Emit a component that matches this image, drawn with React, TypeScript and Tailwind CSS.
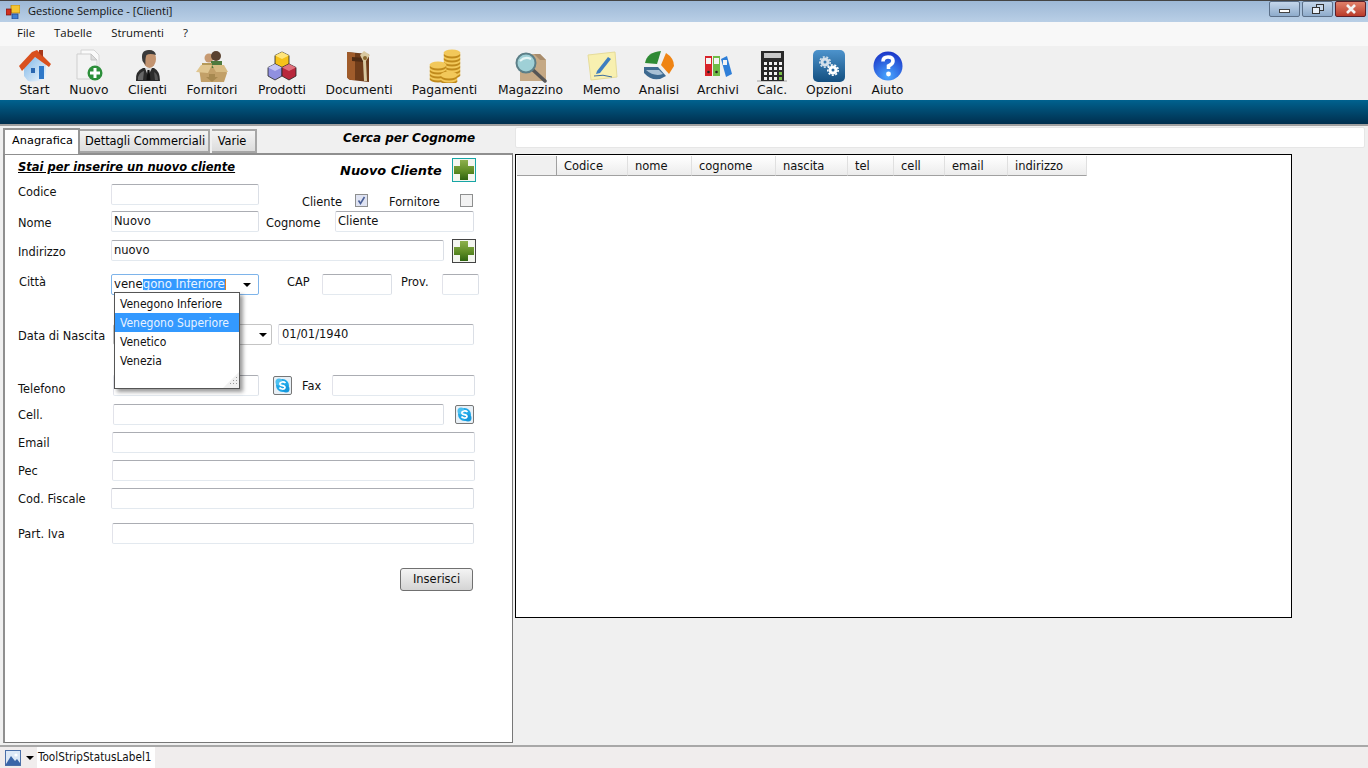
import type { ReactNode } from "react";

const DV = "font-['DejaVu_Sans',sans-serif]";
const COND = "font-['DejaVu_Sans_Condensed','DejaVu_Sans',sans-serif]";

function HouseIcon() {
  return (
    <svg width="34" height="34" viewBox="0 0 34 34">
      <defs>
        <linearGradient id="wall" x1="0" y1="0" x2="1" y2="1">
          <stop offset="0" stopColor="#7db6e8" />
          <stop offset="1" stopColor="#f4f8fc" />
        </linearGradient>
      </defs>
      <path d="M6 16 L17 8 L28 15 L28 29 Q18 34 10 32 L6 27 Z" fill="url(#wall)" />
      <path d="M1 17 L14 3 L19 1 L33 15 L31 18 L17 8 L4 22 Z" fill="#d9501e" />
      <path d="M21 1 h4 v7 l-4 -4 Z" fill="#a8381a" />
      <rect x="13" y="19" width="4" height="5" fill="#2a66b0" />
      <rect x="21" y="17" width="5" height="13" fill="#2f78c8" />
    </svg>
  );
}

function NewDocIcon() {
  return (
    <svg width="34" height="34" viewBox="0 0 34 34">
      <path d="M9 1 H22 L27 6 V26 H9 Z" fill="#fafafa" stroke="#d4d4d4" />
      <path d="M5 5 H19 L25 11 V30 H5 Z" fill="#f3f3f3" stroke="#cfcfcf" />
      <path d="M19 5 V11 H25 Z" fill="#dcdcdc" stroke="#c4c4c4" />
      <circle cx="23" cy="24" r="7.5" fill="#2c8f3a" />
      <path d="M23 19 v10 M18 24 h10" stroke="#fff" strokeWidth="3" />
    </svg>
  );
}

function PersonIcon() {
  return (
    <svg width="34" height="34" viewBox="0 0 34 34">
      <path d="M5 32 Q4 22 12 19 L23 19 Q29 22 29 32 Z" fill="#2b2b2b" />
      <path d="M14 19 L17 27 L21 19 Z" fill="#dcdcdc" />
      <path d="M16.5 21 h2 l1 10 h-4 Z" fill="#111" />
      <path d="M7 28 Q9 23 13 22 L12 31 H7 Z" fill="#666" />
      <path d="M23 23 Q27 25 27 31 H24 Z" fill="#555" />
      <ellipse cx="18.5" cy="10" rx="6.5" ry="9" fill="#c39470" />
      <path d="M11.5 12 Q9 1 18 1 Q24 1 25 6 Q19 4 15.5 6 Q14 9 14.5 16 Z" fill="#3a3a3a" />
    </svg>
  );
}

function BoxIcon() {
  return (
    <svg width="34" height="34" viewBox="0 0 34 34">
      <circle cx="14" cy="9" r="4.5" fill="#c79a72" />
      <circle cx="21" cy="7" r="5" fill="#5a4230" />
      <path d="M16 12 h11 v8 h-11 Z" fill="#4e7a3e" />
      <path d="M7 14 h10 v6 h-10 Z" fill="#b59a5a" />
      <path d="M4 19 H30 L32 24 L29 33 H6 Z" fill="#c2a068" />
      <path d="M1 23 L6 16 H17 L13 24 Z" fill="#e0c690" />
      <path d="M17 16 H29 L33 23 H21 Z" fill="#d8bc84" />
      <path d="M14 25 h6 v3 h3 l-6 5 l-6 -5 h3 Z" fill="#a78950" />
    </svg>
  );
}

function CubesIcon() {
  return (
    <svg width="34" height="34" viewBox="0 0 34 34">
      <path d="M17 3 L24 6.5 V15 L17 18.5 L10 15 V6.5 Z" fill="#f6c21a" stroke="#222" strokeWidth="0.8" />
      <path d="M10 6.5 L17 10 L24 6.5 L17 3 Z" fill="#ffe57a" />
      <path d="M10 15 L17 18.5 V27 L10 31 L3 27 V18.5 Z" fill="#9090e0" stroke="#222" strokeWidth="0.8" />
      <path d="M3 18.5 L10 22 L17 18.5 L10 15 Z" fill="#c5c5f5" />
      <path d="M24 15 L31 18.5 V27 L24 31 L17 27 V18.5 Z" fill="#b8283c" stroke="#222" strokeWidth="0.8" />
      <path d="M17 18.5 L24 22 L31 18.5 L24 15 Z" fill="#e0707c" />
    </svg>
  );
}

function BookIcon() {
  return (
    <svg width="34" height="34" viewBox="0 0 34 34">
      <path d="M5 3 L27 5 V33 L9 31 Q5 30 5 27 Z" fill="#6e3c1a" />
      <path d="M5 3 L13 4 V31 L9 31 Q5 30 5 27 Z" fill="#a05c2b" />
      <path d="M10 8 L22 9 V13 L10 12 Z" fill="#4f2c14" />
      <path d="M22 2 L28 6 L24 12 L25 32 L22 32 L21 12 L18 6 Z" fill="#d9c9a0" />
      <circle cx="23" cy="9" r="2" fill="#8a6a30" />
    </svg>
  );
}

function CoinStack({ x, top, n }: { x: number; top: number; n: number }) {
  const coins = Array.from({ length: n }, (_, i) => top + i * 4);
  return (
    <g>
      {coins.reverse().map((y) => (
        <g key={y}>
          <ellipse cx={x} cy={y + 2} rx="8.5" ry="3.5" fill="#c08a1c" />
          <ellipse cx={x} cy={y} rx="8.5" ry="3.5" fill="#f2c85a" />
        </g>
      ))}
    </g>
  );
}

function CoinsIcon() {
  return (
    <svg width="34" height="34" viewBox="0 0 34 34">
      <CoinStack x={24} top={4} n={6} />
      <CoinStack x={10} top={16} n={4} />
      <CoinStack x={21} top={26} n={2} />
    </svg>
  );
}

function MagnifierIcon() {
  return (
    <svg width="34" height="34" viewBox="0 0 34 34">
      <path d="M6 5 H26 L32 11 V32 H6 Z" fill="#c5a985" />
      <path d="M20 5 H26 L32 11 H26 Z" fill="#a88c6c" />
      <path d="M19 21 L31 32" stroke="#555" strokeWidth="3.5" strokeLinecap="round" />
      <circle cx="12" cy="14" r="9.5" fill="#9fd0d6" stroke="#5c7f88" strokeWidth="2" />
      <path d="M6 12 Q11 7 17 10" stroke="#e4f5f5" strokeWidth="2" fill="none" />
    </svg>
  );
}

function NoteIcon() {
  return (
    <svg width="34" height="34" viewBox="0 0 34 34">
      <path d="M3 6 L30 3 L32 28 L6 31 Z" fill="#f8f0b0" stroke="#e6dc9a" />
      <path d="M12 22 L23 8 L26 10 L15 24 L11 25 Z" fill="#3f7fc0" />
      <path d="M9 27 Q18 25 27 28" stroke="#3f6fa0" strokeWidth="1" fill="none" />
    </svg>
  );
}

function PieIcon() {
  return (
    <svg width="34" height="34" viewBox="0 0 34 34">
      <path d="M15 15 L3 14 Q5 3 19 2 Z" fill="#2f8a34" />
      <path d="M19 16 L24 4 Q32 9 32 17 L27 25 Z" fill="#ef8414" />
      <path d="M2 18 L16 18 L24 27 Q12 35 2 24 Z" fill="#3e6a90" />
      <path d="M4 21 H17 L21 25 Q12 28 4 21 Z" fill="#a8c0d4" />
    </svg>
  );
}

function BindersIcon() {
  return (
    <svg width="34" height="34" viewBox="0 0 34 34">
      <rect x="4" y="7" width="7" height="20" fill="#d8232a" />
      <rect x="12" y="7" width="7" height="20" fill="#6fbb47" />
      <path d="M20 10 L26 7 L31 25 L25 28 Z" fill="#2f7fd8" />
      <rect x="5" y="9" width="5" height="6" fill="#f4f4f4" />
      <rect x="13" y="9" width="5" height="6" fill="#f4f4f4" />
      <rect x="22" y="11" width="4" height="5" fill="#f4f4f4" />
      <circle cx="7.5" cy="23" r="1.3" fill="#222" />
      <circle cx="15.5" cy="23" r="1.3" fill="#222" />
    </svg>
  );
}

function CalcIcon() {
  const keys = [13, 18, 23, 28].flatMap((y) =>
    [9, 14, 19, 24].map((x) => (
      <rect key={`${x}-${y}`} x={x} y={y} width="3" height="3" fill={x === 24 && y > 20 ? "#7cc04a" : "#f2f2f2"} />
    )),
  );
  return (
    <svg width="34" height="34" viewBox="0 0 34 34">
      <rect x="2" y="31" width="30" height="2" fill="#c8c8c8" />
      <rect x="6" y="2" width="23" height="30" fill="#2a2a2a" />
      <rect x="9" y="4" width="17" height="5" fill="#c8c8c8" />
      {keys}
    </svg>
  );
}

function GearsIcon() {
  return (
    <svg width="34" height="34" viewBox="0 0 34 34">
      <defs>
        <linearGradient id="tile" x1="0" y1="0" x2="0" y2="1">
          <stop offset="0" stopColor="#4d93cc" />
          <stop offset="1" stopColor="#134f80" />
        </linearGradient>
      </defs>
      <rect x="1" y="1" width="32" height="32" rx="5" fill="url(#tile)" />
      <circle cx="13" cy="13" r="3" fill="none" stroke="#d4e0ea" strokeWidth="3" />
      <circle cx="13" cy="13" r="5.2" fill="none" stroke="#d4e0ea" strokeWidth="1.6" strokeDasharray="2 1.6" />
      <circle cx="21" cy="21" r="3" fill="none" stroke="#fff" strokeWidth="3" />
      <circle cx="21" cy="21" r="5.2" fill="none" stroke="#fff" strokeWidth="1.6" strokeDasharray="2 1.6" />
    </svg>
  );
}

function HelpIcon() {
  return (
    <svg width="34" height="34" viewBox="0 0 34 34">
      <defs>
        <radialGradient id="help" cx="0.5" cy="0.85" r="0.85">
          <stop offset="0" stopColor="#4aa8ff" />
          <stop offset="1" stopColor="#1a34c8" />
        </radialGradient>
      </defs>
      <circle cx="17" cy="17" r="14.5" fill="url(#help)" />
      <path d="M12 12.5 Q12 8 17 8 Q22 8 22 12 Q22 15 17.5 17 V20" fill="none" stroke="#fff" strokeWidth="3.6" />
      <circle cx="17.5" cy="25" r="2.4" fill="#fff" />
    </svg>
  );
}

const tools: { label: string; w: string; icon: ReactNode }[] = [
  { label: "Start", w: "w-[31px]", icon: <HouseIcon /> },
  { label: "Nuovo", w: "w-[40px]", icon: <NewDocIcon /> },
  { label: "Clienti", w: "w-[39px]", icon: <PersonIcon /> },
  { label: "Fornitori", w: "w-[52px]", icon: <BoxIcon /> },
  { label: "Prodotti", w: "w-[50px]", icon: <CubesIcon /> },
  { label: "Documenti", w: "w-[66px]", icon: <BookIcon /> },
  { label: "Pagamenti", w: "w-[67px]", icon: <CoinsIcon /> },
  { label: "Magazzino", w: "w-[67px]", icon: <MagnifierIcon /> },
  { label: "Memo", w: "w-[37px]", icon: <NoteIcon /> },
  { label: "Analisi", w: "w-[40px]", icon: <PieIcon /> },
  { label: "Archivi", w: "w-[40px]", icon: <BindersIcon /> },
  { label: "Calc.", w: "w-[30px]", icon: <CalcIcon /> },
  { label: "Opzioni", w: "w-[46px]", icon: <GearsIcon /> },
  { label: "Aiuto", w: "w-[33px]", icon: <HelpIcon /> },
];

const columns = [
  { name: "Codice", w: "w-[71px]" },
  { name: "nome", w: "w-[64px]" },
  { name: "cognome", w: "w-[84px]" },
  { name: "nascita", w: "w-[72px]" },
  { name: "tel", w: "w-[46px]" },
  { name: "cell", w: "w-[51px]" },
  { name: "email", w: "w-[63px]" },
  { name: "indirizzo", w: "w-[79px]" },
];

function Field({ className, value }: { className: string; value?: string }) {
  return (
    <div
      className={`flex h-[21px] shrink-0 items-center rounded-[2px] border border-[#abadb3] border-r-[#dbdfe6] border-b-[#e3e9ef] border-l-[#e2e3ea] bg-white pl-[2px] text-[11.5px] leading-none text-[#111] ${className}`}
    >
      {value}
    </div>
  );
}

function PlusButton({ teal }: { teal?: boolean }) {
  return (
    <div
      className={`flex h-[24px] w-[24px] shrink-0 items-center justify-center border ${teal ? "border-[#17a5a5]" : "border-[#444]"} bg-[#f4f6f0]`}
    >
      <svg width="20" height="20" viewBox="0 0 20 20">
        <defs>
          <linearGradient id="plus" x1="0" y1="0" x2="0" y2="1">
            <stop offset="0" stopColor="#8db04c" />
            <stop offset="0.55" stopColor="#5f8d25" />
            <stop offset="1" stopColor="#2f6410" />
          </linearGradient>
        </defs>
        <path d="M6 0 h8 v6 h6 v8 h-6 v6 h-8 v-6 h-6 v-8 h6 Z" fill="url(#plus)" />
      </svg>
    </div>
  );
}

function SkypeButton() {
  return (
    <div className="flex h-[19px] w-[19px] shrink-0 items-center justify-center rounded-[2px] border border-[#777] bg-[#e8f0f6]">
      <svg width="15" height="15" viewBox="0 0 15 15">
        <circle cx="7.5" cy="7.5" r="6.5" fill="#1fa8e8" />
        <circle cx="4" cy="4" r="3.5" fill="#4cc0f0" />
        <circle cx="11" cy="11" r="3.5" fill="#1598dc" />
        <path d="M10.5 5 Q9 3.5 7 4 Q4.5 4.5 5 6.3 Q5.5 7.5 7.5 7.7 Q10 8 10 9.7 Q9.5 11.3 7.2 11 Q5.2 10.8 4.5 9.5" fill="none" stroke="#fff" strokeWidth="1.7" />
      </svg>
    </div>
  );
}

function Checkbox({ checked }: { checked?: boolean }) {
  return (
    <div className={`flex h-[13px] w-[13px] shrink-0 items-center justify-center border border-[#8e8f8f] ${checked ? "bg-[#dfe3f2]" : "bg-[#f2f2f2]"}`}>
      {checked && (
        <svg width="9" height="9" viewBox="0 0 9 9">
          <path d="M1.5 4.5 L3.5 7.5 L7.5 1" fill="none" stroke="#4a5f97" strokeWidth="1.6" />
        </svg>
      )}
    </div>
  );
}

function ComboArrow() {
  return <div className="h-0 w-0 border-x-[4px] border-t-[4px] border-x-transparent border-t-black" />;
}

export default function App() {
  return (
    <div className={`flex h-[768px] w-[1368px] flex-col overflow-hidden bg-[#f0f0f0] ${DV} text-black`}>
      {/* title bar */}
      <div className="flex h-[22px] shrink-0 items-center border-t border-[#444] bg-gradient-to-b from-[#9db8d6] to-[#b9cfe6] pl-[6px]">
        <svg width="14" height="14" viewBox="0 0 14 14">
          <rect x="5" y="0" width="9" height="8" fill="#f4c430" stroke="#a87a10" strokeWidth="0.7" />
          <rect x="0" y="4" width="5" height="6" fill="#d03020" stroke="#701010" strokeWidth="0.7" />
          <rect x="6" y="9" width="6" height="5" fill="#3f7fd0" stroke="#204080" strokeWidth="0.7" />
        </svg>
        <span className="ml-[8px] font-['Open_Sans',sans-serif] text-[11.1px] text-[#111]">Gestione Semplice - [Clienti]</span>
        <div className="ml-auto flex items-start self-start pr-[2px]">
          <div className="flex h-[16px] w-[31px] items-center justify-center rounded-[2px] border border-[#5b6f88] bg-gradient-to-b from-[#c4d6ea] to-[#8eabcb]">
            <div className="mt-[3px] h-[4px] w-[11px] border border-[#444] bg-white" />
          </div>
          <div className="ml-[2px] flex h-[16px] w-[31px] items-center justify-center rounded-[2px] border border-[#5b6f88] bg-gradient-to-b from-[#c4d6ea] to-[#8eabcb]">
            <svg width="12" height="10" viewBox="0 0 12 10">
              <rect x="4.5" y="0.5" width="7" height="6" fill="#c8d8ea" stroke="#333" />
              <rect x="0.5" y="3.5" width="7" height="6" fill="#e8eff7" stroke="#333" />
            </svg>
          </div>
          <div className="ml-[2px] flex h-[16px] w-[31px] items-center justify-center rounded-[2px] border border-[#5a1f2a] bg-gradient-to-b from-[#e0806a] to-[#b93a2a]">
            <svg width="12" height="10" viewBox="0 0 12 10">
              <path d="M2 1 L10 9 M10 1 L2 9" stroke="#f4f4f4" strokeWidth="2.6" />
            </svg>
          </div>
        </div>
      </div>

      {/* menu */}
      <div className="flex h-[24px] shrink-0 items-center gap-[19px] bg-[#f8f8f8] pb-[2px] pl-[17px] font-['Open_Sans',sans-serif] text-[11.4px] text-[#111]">
        <span>File</span>
        <span>Tabelle</span>
        <span>Strumenti</span>
        <span>?</span>
      </div>

      {/* toolbar */}
      <div className="flex h-[54px] shrink-0 items-start gap-[19px] bg-[#f0f0f0] pl-[19px]">
        {tools.map((t) => (
          <div key={t.label} className={`flex ${t.w} shrink-0 flex-col items-center pt-[3px]`}>
            <div className="flex h-[34px] w-0 items-center justify-center">
              <div className="shrink-0">{t.icon}</div>
            </div>
            <span className="mt-[-1px] text-[12.3px] leading-[17px] whitespace-nowrap text-[#111]">{t.label}</span>
          </div>
        ))}
      </div>

      {/* blue band */}
      <div className="h-[24px] shrink-0 bg-gradient-to-b from-[#00628f] to-[#002f4e]" />
      <div className="h-[2px] shrink-0 bg-[#a0a0a0]" />

      <div className="flex min-h-0 flex-1 pt-[2px] pl-[3px]">
        {/* left panel */}
        <div className="flex w-[510px] shrink-0 flex-col">
          <div className="flex h-[25px] shrink-0 items-end">
            <div className="z-10 mb-[-1px] flex h-[26px] w-[77px] items-center justify-center border-x-2 border-t-2 border-[#959595] border-b-0 bg-white pb-[1px] pl-[2px] text-[11.3px]">
              Anagrafica
            </div>
            <div className="flex h-[24px] w-[130px] items-center justify-center border-2 border-l-0 border-[#a6a6a6] bg-gradient-to-b from-[#f4f4f4] to-[#dcdcdc] pt-[2px] pl-[2px] text-[11.4px]">
              Dettagli Commerciali
            </div>
            <div className="ml-[2px] flex h-[24px] w-[45px] items-center justify-center border-2 border-l-0 border-[#a6a6a6] bg-gradient-to-b from-[#f4f4f4] to-[#dcdcdc] pt-[2px] pr-[3px] text-[11.4px]">
              Varie
            </div>
            <span className="mb-[6px] ml-[86px] text-[12px] font-bold whitespace-nowrap italic">Cerca per Cognome</span>
          </div>

          <div className="relative flex min-h-0 flex-1 flex-col border-2 border-r border-b border-[#8f8f8f] border-r-[#777] border-b-[#777] bg-white pl-[13px] text-[11.4px] text-[#111]">
            {/* header row */}
            <div className="flex h-[29px] shrink-0">
              <span className="mt-[4px] text-[11.5px] font-bold whitespace-nowrap text-black italic underline">
                Stai per inserire un nuovo cliente
              </span>
              <span className="mt-[6px] ml-[105px] w-[101px] text-[12.9px] font-bold whitespace-nowrap text-black italic">Nuovo Cliente</span>
              <div className="mt-[3px] ml-[11px]">
                <PlusButton teal />
              </div>
            </div>

            {/* codice */}
            <div className="flex h-[27px] shrink-0">
              <span className="w-[93px] shrink-0">Codice</span>
              <Field className="w-[148px] border-[#8c8c8c]" />
              <span className="mt-[10px] ml-[43px] w-[53px] shrink-0">Cliente</span>
              <div className="mt-[10px]">
                <Checkbox checked />
              </div>
              <span className="mt-[10px] ml-[21px] w-[71px] shrink-0">Fornitore</span>
              <div className="mt-[10px]">
                <Checkbox />
              </div>
            </div>

            {/* nome */}
            <div className="flex h-[29px] shrink-0">
              <span className="mt-[4px] w-[93px] shrink-0">Nome</span>
              <Field className="w-[148px]" value="Nuovo" />
              <span className="mt-[4px] ml-[7px] w-[69px] shrink-0">Cognome</span>
              <Field className="w-[139px]" value="Cliente" />
            </div>

            {/* indirizzo */}
            <div className="flex h-[34px] shrink-0">
              <span className="mt-[4px] w-[93px] shrink-0">Indirizzo</span>
              <Field className="w-[333px]" value="nuovo" />
              <div className="mt-[-1px] ml-[8px]">
                <PlusButton />
              </div>
            </div>

            {/* citta */}
            <div className="flex h-[50px] shrink-0 pl-[1px]">
              <span className="w-[92px] shrink-0">Città</span>
              <div className="flex h-[21px] w-[148px] shrink-0 items-center rounded-[2px] border border-[#7eb4ea] bg-white pl-[2px] text-[11.7px] leading-none whitespace-nowrap">
                <span>vene</span>
                <span className="border-r border-[#e08020] bg-[#3399ff] text-[#eaf4ff]">gono Inferiore</span>
                <span className="ml-auto pr-[7px]">
                  <ComboArrow />
                </span>
              </div>
              <span className="ml-[28px] w-[35px] shrink-0">CAP</span>
              <Field className="w-[70px]" />
              <span className="ml-[9px] w-[41px] shrink-0">Prov.</span>
              <Field className="w-[37px]" />
            </div>

            {/* nascita */}
            <div className="flex h-[51px] shrink-0">
              <span className="mt-[4px] w-[95px] shrink-0 whitespace-nowrap">Data di Nascita</span>
              <div className="flex h-[21px] w-[159px] shrink-0 items-center justify-end rounded-[2px] border border-[#c4c4c4] bg-white pr-[4px]">
                <span className="mr-[20px] text-[11.5px]">o</span>
                <ComboArrow />
              </div>
              <Field className="ml-[6px] w-[196px] !pl-[3px]" value="01/01/1940" />
            </div>

            {/* telefono */}
            <div className="flex h-[29px] shrink-0">
              <span className="mt-[6px] w-[95px] shrink-0">Telefono</span>
              <Field className="w-[146px]" />
              <div className="mt-[1px] ml-[14px]">
                <SkypeButton />
              </div>
              <span className="mt-[3px] ml-[10px] w-[30px] shrink-0">Fax</span>
              <Field className="w-[143px]" />
            </div>

            {/* cell */}
            <div className="flex h-[28px] shrink-0">
              <span className="mt-[3px] w-[95px] shrink-0">Cell.</span>
              <Field className="w-[331px]" />
              <div className="mt-[1px] ml-[11px]">
                <SkypeButton />
              </div>
            </div>

            <div className="flex h-[28px] shrink-0">
              <span className="mt-[3px] w-[94px] shrink-0">Email</span>
              <Field className="w-[363px]" />
            </div>
            <div className="flex h-[28px] shrink-0">
              <span className="mt-[3px] w-[94px] shrink-0">Pec</span>
              <Field className="w-[363px]" />
            </div>
            <div className="flex h-[35px] shrink-0">
              <span className="mt-[3px] w-[93px] shrink-0 whitespace-nowrap">Cod. Fiscale</span>
              <Field className="w-[363px]" />
            </div>
            <div className="flex h-[45px] shrink-0">
              <span className="mt-[3px] w-[94px] shrink-0">Part. Iva</span>
              <Field className="w-[362px]" />
            </div>

            <div className="flex shrink-0 pl-[382px]">
              <div className="flex h-[23px] w-[73px] items-center justify-center rounded-[3px] border border-[#707070] bg-gradient-to-b from-[#f4f4f4] to-[#d4d4d4] text-[11.5px]">
                Inserisci
              </div>
            </div>

            {/* open city dropdown */}
            <div className={`absolute top-[137px] left-[109px] flex h-[97px] w-[126px] flex-col border border-[#555] bg-white pt-px ${COND} text-[12px] shadow-[3px_3px_4px_rgba(0,0,0,0.4)]`}>
              <div className="flex h-[19px] items-center pl-[5px]">Venegono Inferiore</div>
              <div className="flex h-[19px] items-center bg-[#3399ff] pl-[5px] text-[#e8f2ff]">Venegono Superiore</div>
              <div className="flex h-[19px] items-center pl-[5px]">Venetico</div>
              <div className="flex h-[19px] items-center pl-[5px]">Venezia</div>
              <svg className="absolute right-0 bottom-0" width="16" height="16" viewBox="0 0 16 16">
                <path d="M16 0 L0 16 H16 Z" fill="#f0f0f0" />
                <path d="M13 5 h1 v1 h-1 Z M10 8 h1 v1 h-1 Z M13 8 h1 v1 h-1 Z M7 11 h1 v1 h-1 Z M10 11 h1 v1 h-1 Z M13 11 h1 v1 h-1 Z" fill="#999" />
              </svg>
            </div>
          </div>
        </div>

        {/* right side */}
        <div className="ml-[2px] flex min-w-0 flex-1 flex-col">
          <div className="mt-[-1px] mr-[3px] h-[21px] shrink-0 rounded-[2px] border border-[#e6e6e6] bg-white" />
          <div className="mt-[6px] flex h-[464px] w-[777px] shrink-0 flex-col border border-black bg-white p-px">
            <div className="flex h-[20px] shrink-0 text-[11.5px] text-[#111]">
              <div className="w-[40px] border-r border-b border-[#a0a0a0] bg-[#f0f0f0]" />
              {columns.map((c) => (
                <div
                  key={c.name}
                  className={`${c.w} flex items-center border-r border-b border-r-[#e0e0e0] border-b-[#a0a0a0] bg-gradient-to-b from-white to-[#ececec] pt-[3px] pl-[7px]`}
                >
                  {c.name}
                </div>
              ))}
            </div>
          </div>
        </div>
      </div>

      {/* status bar */}
      <div className="mt-[2px] flex h-[23px] shrink-0 items-center border-t-2 border-[#a8a8a8] bg-[#f0eded] pl-[5px]">
        <svg width="16" height="16" viewBox="0 0 16 16">
          <rect x="0.5" y="0.5" width="15" height="15" fill="#dce8f6" stroke="#4a6fa8" />
          <path d="M1 14 L6 6 L10 11 L12 9 L15 13 V15 H1 Z" fill="#3a66a8" />
          <circle cx="11" cy="5" r="1.6" fill="#fff" />
        </svg>
        <div className="ml-[5px] h-0 w-0 border-x-[4px] border-t-[4px] border-x-transparent border-t-black" />
        <span className={`ml-[3px] flex h-full items-center bg-white pr-[3px] pl-[1px] ${COND} text-[11.7px] text-[#111]`}>ToolStripStatusLabel1</span>
      </div>
    </div>
  );
}
